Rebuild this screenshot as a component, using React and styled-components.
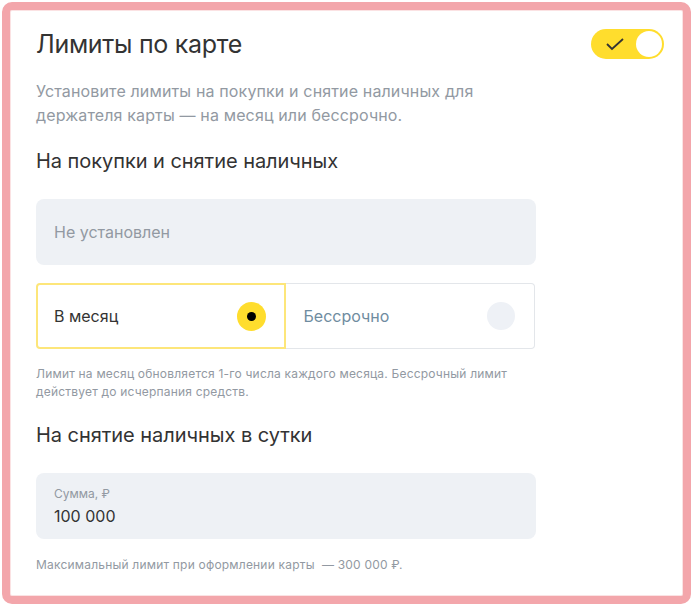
import React from 'react';
import styled, { createGlobalStyle } from 'styled-components';

const GlobalStyle = createGlobalStyle`
  html, body {
    margin: 0;
    padding: 0;
    background: #ffffff;
  }
  body {
    font-family: Inter, 'Liberation Sans', Arial, sans-serif;
    color: #333333;
  }
`;

const Frame = styled.div`
  box-sizing: border-box;
  width: 689px;
  margin: 2px 0 0 2px;
  border: 8px solid #f3a6ab;
  border-radius: 10px;
  background: #ffffff;
  box-shadow: inset 0 0 0 1px #fbe2e3;
`;

const Card = styled.section`
  display: flex;
  flex-direction: column;
  padding: 19px 19px 22px 26px;
`;

const Header = styled.div`
  display: flex;
  align-items: center;
  justify-content: space-between;
  height: 30px;
`;

const Title = styled.h1`
  margin: 0;
  font-size: 25px;
  font-weight: 400;
  line-height: 30px;
  letter-spacing: -0.3px;
  color: #333333;
`;

const Toggle = styled.div`
  position: relative;
  width: 73px;
  height: 30px;
  border-radius: 15px;
  background: #ffdd2d;
  flex-shrink: 0;
`;

const Knob = styled.span`
  position: absolute;
  top: 2px;
  right: 2px;
  width: 26px;
  height: 26px;
  border-radius: 50%;
  background: #ffffff;
`;

const Check = styled.svg`
  position: absolute;
  left: 14px;
  top: 8px;
`;

const Description = styled.p`
  margin: 20px 0 0;
  max-width: 490px;
  font-size: 16px;
  line-height: 24px;
  letter-spacing: 0.14px;
  color: #9299a2;
`;

const Subtitle = styled.h2`
  margin: ${p => p.$top}px 0 0;
  font-size: 20px;
  font-weight: 400;
  line-height: 28px;
  letter-spacing: -0.05px;
  color: #333333;
`;

const Field = styled.div`
  box-sizing: border-box;
  display: flex;
  flex-direction: column;
  justify-content: center;
  width: 500px;
  height: 66px;
  margin-top: 24px;
  padding: 0 18px;
  border-radius: 8px;
  background: #eef1f5;
`;

const Placeholder = styled.span`
  font-size: 16px;
  line-height: 20px;
  color: #9299a2;
`;

const FieldLabel = styled.span`
  font-size: 12px;
  line-height: 16px;
  color: #9299a2;
`;

const FieldValue = styled.span`
  margin-top: 4px;
  font-size: 16px;
  line-height: 20px;
  color: #333333;
`;

const Segments = styled.div`
  display: flex;
  width: 499px;
  margin-top: 18px;
`;

const Segment = styled.div`
  box-sizing: border-box;
  flex: 1;
  display: flex;
  align-items: center;
  justify-content: space-between;
  height: 66px;
  padding: 0 ${p => (p.$active ? 18 : 19)}px 0 ${p => (p.$active ? 16 : 18)}px;
  border: ${p => (p.$active ? '2px solid #fde67a' : '1px solid #e3e6ea')};
  border-left-width: ${p => (p.$active ? '2px' : '0')};
  border-radius: ${p => (p.$active ? '4px 0 0 4px' : '0 4px 4px 0')};
  font-size: 16px;
  color: ${p => (p.$active ? '#333333' : '#6f8ca0')};
`;

const Radio = styled.span`
  display: flex;
  align-items: center;
  justify-content: center;
  width: ${p => (p.$checked ? 29 : 28)}px;
  height: ${p => (p.$checked ? 29 : 28)}px;
  border-radius: 50%;
  background: ${p => (p.$checked ? '#ffdd2d' : '#eef1f6')};

  &::after {
    content: '';
    display: ${p => (p.$checked ? 'block' : 'none')};
    width: 9px;
    height: 9px;
    border-radius: 50%;
    background: #000000;
  }
`;

const Note = styled.p`
  margin: ${p => p.$top}px 0 0;
  max-width: 500px;
  font-size: 12px;
  line-height: 18px;
  letter-spacing: 0.2px;
  color: #9299a2;
`;

export default function App() {
  return (
    <>
      <GlobalStyle />
      <Frame>
        <Card>
          <Header>
            <Title>Лимиты по карте</Title>
            <Toggle>
              <Check width="20" height="14" viewBox="0 0 20 14" fill="none">
                <path d="M2 7l5 5L18 2" stroke="#333" strokeWidth="1.8" />
              </Check>
              <Knob />
            </Toggle>
          </Header>
          <Description>
            Установите лимиты на покупки и снятие наличных для держателя карты — на месяц или бессрочно.
          </Description>

          <Subtitle $top={20}>На покупки и снятие наличных</Subtitle>
          <Field>
            <Placeholder>Не установлен</Placeholder>
          </Field>
          <Segments>
            <Segment $active>
              В месяц
              <Radio $checked />
            </Segment>
            <Segment>
              Бессрочно
              <Radio />
            </Segment>
          </Segments>
          <Note $top={16}>
            Лимит на месяц обновляется 1-го числа каждого месяца. Бессрочный лимит действует до исчерпания средств.
          </Note>

          <Subtitle $top={20}>На снятие наличных в сутки</Subtitle>
          <Field>
            <FieldLabel>Сумма, ₽</FieldLabel>
            <FieldValue>100 000</FieldValue>
          </Field>
          <Note $top={17}>Максимальный лимит при оформлении карты {'\u00a0'}— 300 000 ₽.</Note>
        </Card>
      </Frame>
    </>
  );
}
